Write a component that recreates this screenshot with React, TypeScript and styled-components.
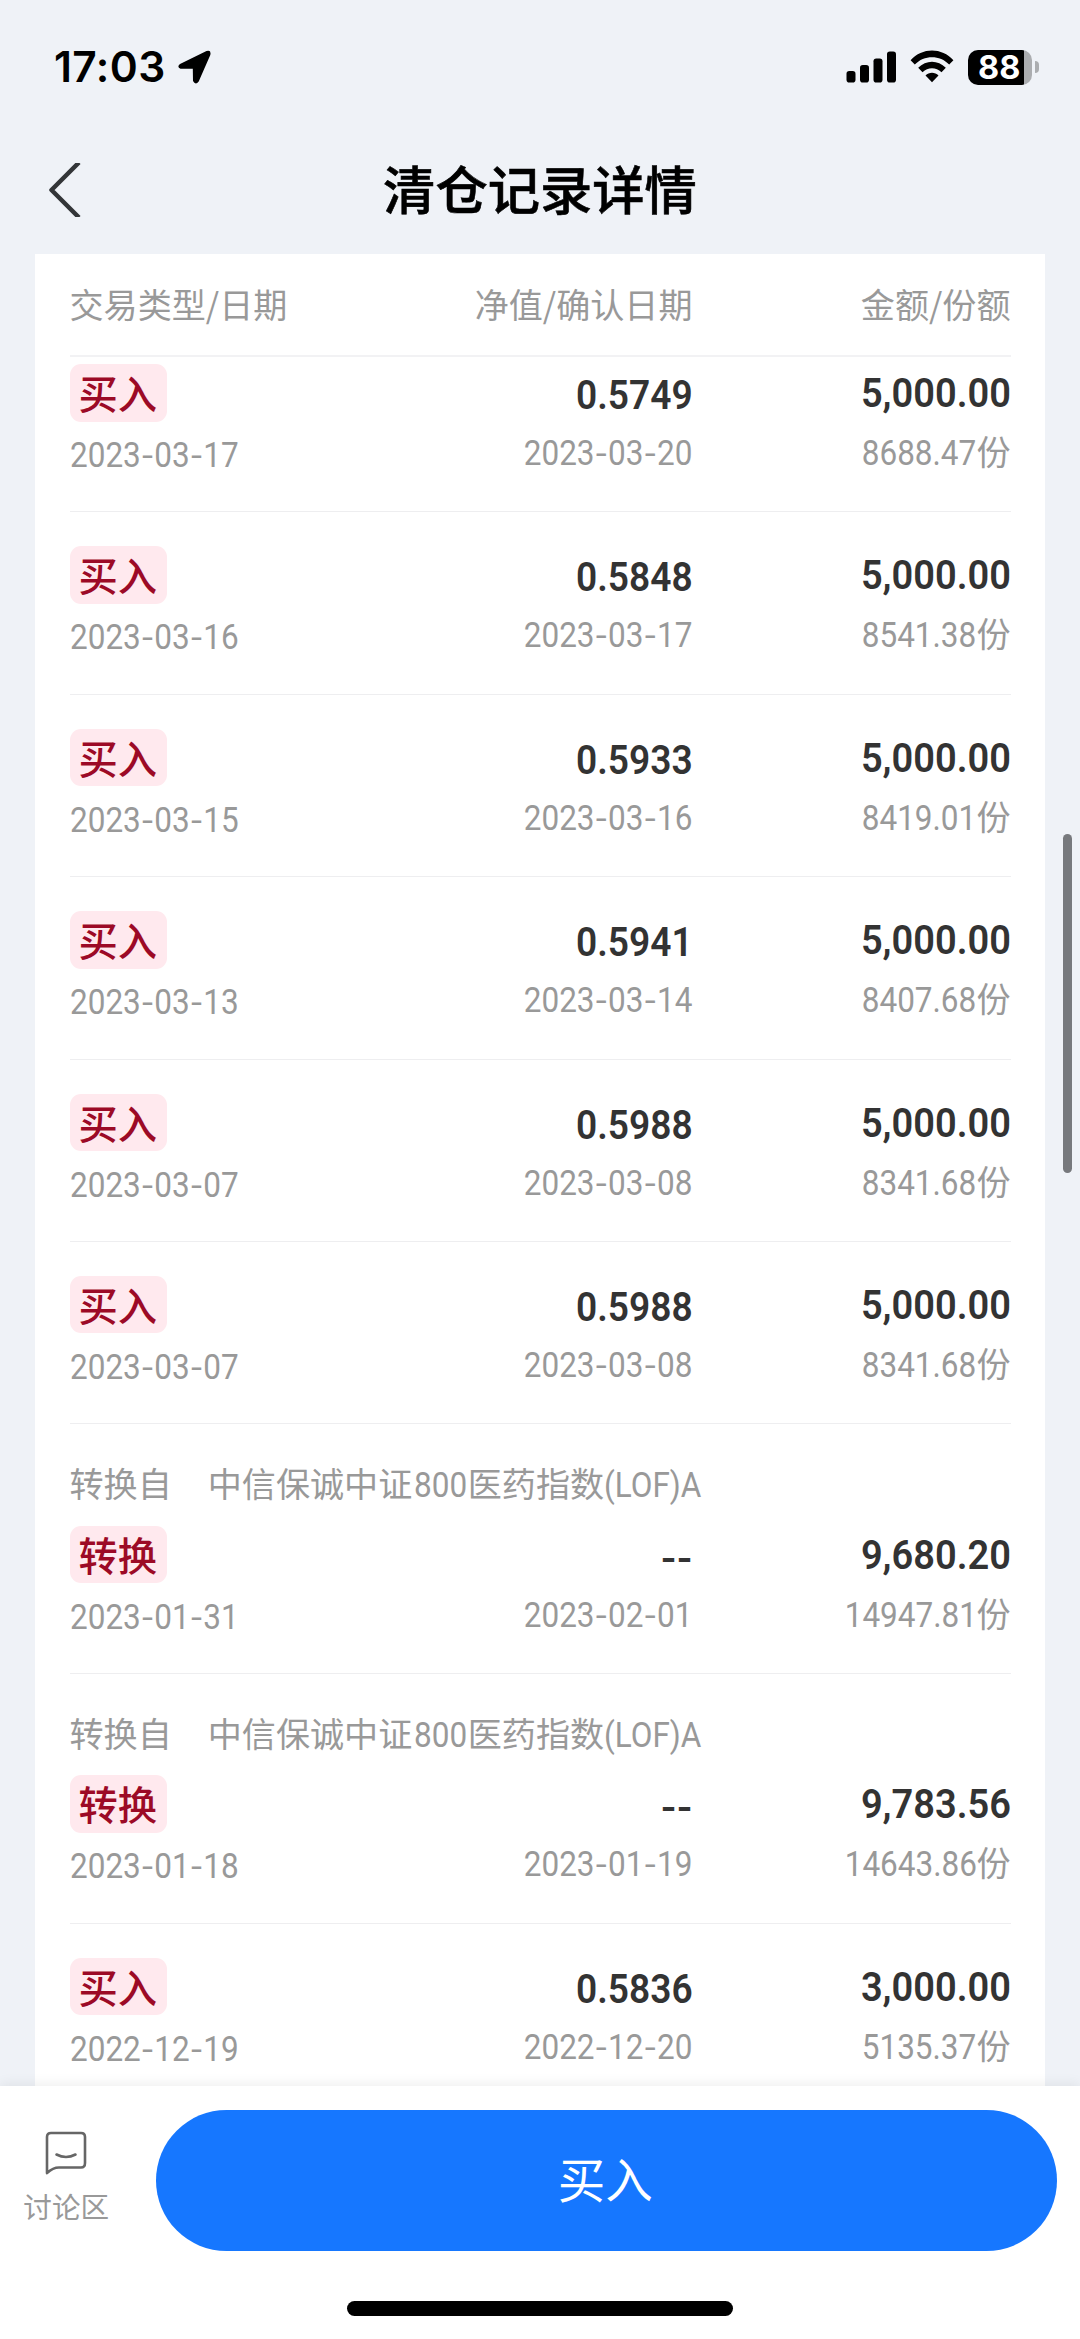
import React from "react";
import styled, { createGlobalStyle } from "styled-components";

const cjk = `"Noto Sans CJK SC", sans-serif`;

const GlobalStyle = createGlobalStyle`
  * { box-sizing: border-box; }
  body { margin: 0; background: #eff2f7; font-family: Roboto, ${cjk}; }
`;

const Screen = styled.div`
  position: relative;
  width: 1080px;
  height: 2339px;
  overflow: hidden;
  display: flex;
  flex-direction: column;
  background: #eff2f7;
`;

const StatusBar = styled.header`
  height: 134px;
  flex: none;
  display: flex;
  align-items: center;
  justify-content: space-between;
  padding: 0 41px 0 54px;
`;

const StatusGroup = styled.div<{ $gap: number }>`
  display: flex;
  align-items: center;
  gap: ${(p) => p.$gap}px;
`;

const Clock = styled.span`
  font: 600 42.5px/50px Inter, sans-serif;
  letter-spacing: 0.4px;
  color: #000;
`;

const Battery = styled.div`
  display: flex;
  align-items: center;
  gap: 2.5px;
`;

const BatteryBody = styled.div`
  width: 64px;
  height: 35px;
  border-radius: 10px;
  background: linear-gradient(to right, #000 56px, #abadb0 56px);
  color: #fff;
  font: 700 32.5px/35px Inter, sans-serif;
  padding-left: 10px;
`;

const BatteryTip = styled.div`
  width: 4.5px;
  height: 12px;
  border-radius: 0 5px 5px 0;
  background: #abadb0;
`;

const NavBar = styled.nav`
  height: 120px;
  flex: none;
  display: grid;
  grid-template-columns: 120px 1fr 120px;
  align-items: center;
`;

const BackButton = styled.button`
  border: 0;
  background: none;
  padding: 0 0 8px 47px;
  display: flex;
`;

const Title = styled.h1`
  margin: 0 0 15px;
  text-align: center;
  font: 500 52.3px/70px ${cjk};
  -webkit-text-stroke: 0.6px #000;
  color: #000;
`;

const Card = styled.main`
  flex: 1;
  min-height: 0;
  overflow: hidden;
  margin: 0 35px;
  padding: 0 34.5px;
  background: #fff;
`;

const columns = `grid-template-columns: 250px 1fr 318px;`;

const TableHead = styled.div`
  display: grid;
  ${columns}
  height: 103px;
  border-bottom: 2px solid #f2f2f4;
  font: 400 34.1px/98px ${cjk};
  color: #999;
`;

const HeadCell = styled.div<{ $end?: boolean }>`
  text-align: ${(p) => (p.$end ? "right" : "left")};
`;

const Record = styled.section<{ $first?: boolean; $last?: boolean }>`
  padding-top: ${(p) => (p.$first ? 7 : 34)}px;
  padding-bottom: 32.4px;
  border-bottom: ${(p) => (p.$last ? 0 : 1)}px solid #eeeef0;
`;

const Source = styled.div`
  display: flex;
  gap: 36px;
  height: 67.3px;
  font: 400 34.1px/48px ${cjk};
  color: #999;
`;

const RecordGrid = styled.div`
  display: grid;
  ${columns}
  height: 115px;
`;

const Cell = styled.div<{ $end?: boolean }>`
  display: flex;
  flex-direction: column;
  align-items: ${(p) => (p.$end ? "flex-end" : "flex-start")};
`;

const Tag = styled.span`
  height: 57.5px;
  padding: 0 10px 0 9px;
  border-radius: 11px;
  background: #ffe9ee;
  color: #9c0a26;
  font: 500 39.3px/55px ${cjk};
`;

const Value = styled.span<{ $top: number; $stretch: number }>`
  margin-top: ${(p) => p.$top}px;
  height: 40px;
  font: 600 40px/40px Roboto, sans-serif;
  transform: scaleX(${(p) => p.$stretch});
  transform-origin: right center;
  color: #333;
`;

const Sub = styled.span<{ $top: number }>`
  margin-top: ${(p) => p.$top}px;
  height: 36px;
  font: 400 35px/36px Roboto, ${cjk};
  white-space: nowrap;
  color: #999;
`;

const Digits = styled.span<{ $from: "left" | "right" }>`
  display: inline-block;
  transform: scaleX(0.9);
  transform-origin: ${(p) => p.$from} center;
`;

const Hyphen = styled.span`
  font-family: Inter, sans-serif;
  font-size: 0.93em;
`;

const Unit = styled.span`
  font: 400 34.1px/36px ${cjk};
`;

const Condensed = styled.span<{ $lead: number; $trim: number }>`
  display: inline-block;
  font: 400 35px/36px Roboto, sans-serif;
  transform: scaleX(0.9);
  transform-origin: left center;
  margin-left: ${(p) => p.$lead}px;
  margin-right: -${(p) => p.$trim}px;
`;

const ScrollThumb = styled.div`
  position: absolute;
  right: 8.5px;
  top: 834px;
  width: 9px;
  height: 339px;
  border-radius: 5px;
  background: #77797d;
`;

const BottomBar = styled.footer`
  position: relative;
  flex: none;
  height: 253px;
  background: #fff;
  box-shadow: 0 -2px 12px rgba(0, 0, 0, 0.07);
  display: flex;
  flex-direction: column;
  justify-content: space-between;
  align-items: center;
  padding: 23.5px 0 23px;
`;

const Actions = styled.div`
  width: 100%;
  display: flex;
  padding-right: 23px;
`;

const Discuss = styled.div`
  width: 155.5px;
  padding: 21px 23px 0 0;
  display: flex;
  flex-direction: column;
  align-items: center;
  font: 400 28.6px/40px ${cjk};
  color: #999;
  gap: 10px;
`;

const BuyButton = styled.button`
  flex: 1;
  height: 141px;
  border: 0;
  border-radius: 71px;
  background: #1677ff;
  color: #fff;
  font: 400 47.5px/136px ${cjk};
  padding: 0 2px 5px 0;
`;

const HomeIndicator = styled.div`
  width: 386px;
  height: 15px;
  border-radius: 8px;
  background: #000;
`;

type Trade = {
  type: string;
  date: string;
  net: string;
  confirmed: string;
  amount: string;
  shares: string;
  from?: boolean;
};

const t = (date: string, net: string, confirmed: string, shares: string, amount = "5,000.00"): Trade => ({
  type: "买入", date, net, confirmed, amount, shares,
});

const trades: Trade[] = [
  t("2023-03-17", "0.5749", "2023-03-20", "8688.47"),
  t("2023-03-16", "0.5848", "2023-03-17", "8541.38"),
  t("2023-03-15", "0.5933", "2023-03-16", "8419.01"),
  t("2023-03-13", "0.5941", "2023-03-14", "8407.68"),
  t("2023-03-07", "0.5988", "2023-03-08", "8341.68"),
  t("2023-03-07", "0.5988", "2023-03-08", "8341.68"),
  { type: "转换", date: "2023-01-31", net: "--", confirmed: "2023-02-01", amount: "9,680.20", shares: "14947.81", from: true },
  { type: "转换", date: "2023-01-18", net: "--", confirmed: "2023-01-19", amount: "9,783.56", shares: "14643.86", from: true },
  t("2022-12-19", "0.5836", "2022-12-20", "5135.37", "3,000.00"),
];

const Dashed = ({ text }: { text: string }) => (
  <>
    {text.split(/(-)/).map((s, i) => (s === "-" ? <Hyphen key={i}>-</Hyphen> : s))}
  </>
);

export default function App() {
  return (
    <Screen>
      <GlobalStyle />
      <StatusBar>
        <StatusGroup $gap={12}>
          <Clock>17:03</Clock>
          <svg width="33" height="34" viewBox="0 0 33 34">
            <path d="M2 14 L28.500 1 Q33.500 -0.500 32.300 5 L20.700 31.500 Q17.500 35.500 15 31 L14.800 18.800 L2.500 18.700 Q-1.500 16.800 2 14Z" fill="#000" />
          </svg>
        </StatusGroup>
        <StatusGroup $gap={14}>
          <svg width="50" height="34" viewBox="0 0 50 34">
            <rect x="0.500" y="21" width="9" height="11.500" rx="2.800" />
            <rect x="14" y="15" width="9" height="17.500" rx="2.800" />
            <rect x="27.500" y="8.500" width="9" height="24" rx="2.800" />
            <rect x="41" y="1.500" width="9" height="31" rx="2.800" />
          </svg>
          <svg width="44" height="34" viewBox="0 0 44 34">
            <path d="M0.600 10.300 C12 -2.800 32 -2.800 43.400 10.300 L39.200 14.600 C30 4.800 14 4.800 4.800 14.600Z" />
            <path d="M8.200 17.800 C16 9.800 28 9.800 35.800 17.800 L31.500 22.200 C26 17 18 17 12.500 22.200Z" />
            <path d="M15.500 25.500 C19 21.800 25 21.800 28.500 25.500 L22 32.300Z" />
          </svg>
          <Battery>
            <BatteryBody>88</BatteryBody>
            <BatteryTip />
          </Battery>
        </StatusGroup>
      </StatusBar>
      <NavBar>
        <BackButton aria-label="返回">
          <svg width="36" height="54" viewBox="0 0 36 54" fill="none" stroke="#333538" strokeWidth="4.500" strokeLinejoin="round">
            <path d="M32 -0.500 L4.500 27 L32 54.500" />
          </svg>
        </BackButton>
        <Title>清仓记录详情</Title>
      </NavBar>
      <Card>
        <TableHead>
          <HeadCell>交易类型/日期</HeadCell>
          <HeadCell $end>净值/确认日期</HeadCell>
          <HeadCell $end>金额/份额</HeadCell>
        </TableHead>
        {trades.map((r, i) => (
          <Record key={i} $first={i === 0} $last={i === trades.length - 1}>
            {r.from && (
              <Source>
                <span>转换自</span>
                <span>
                  中信保诚中证<Condensed $lead={1.5} $trim={5}>800</Condensed>医药指数<Condensed $lead={0} $trim={0}>(LOF)A</Condensed>
                </span>
              </Source>
            )}
            <RecordGrid>
              <Cell>
                <Tag>{r.type}</Tag>
                <Sub $top={15.500}><Digits $from="left"><Dashed text={r.date} /></Digits></Sub>
              </Cell>
              <Cell $end>
                <Value $top={12} $stretch={0.928}><Dashed text={r.net} /></Value>
                <Sub $top={19}><Digits $from="right"><Dashed text={r.confirmed} /></Digits></Sub>
              </Cell>
              <Cell $end>
                <Value $top={10} $stretch={0.95}>{r.amount}</Value>
                <Sub $top={18}><Digits $from="right">{r.shares}</Digits><Unit>份</Unit></Sub>
              </Cell>
            </RecordGrid>
          </Record>
        ))}
      </Card>
      <ScrollThumb />
      <BottomBar>
        <Actions>
          <Discuss>
            <svg width="42" height="45" viewBox="0 0 42 45" fill="none" stroke="#666" strokeWidth="2.600" strokeLinecap="round" strokeLinejoin="round">
              <path d="M2 42 V6 Q2 2 6 2 H36 Q40 2 40 6 V32 Q40 36.500 36 36.500 H14 Q8 36.500 2 42Z" />
              <path d="M11.500 23.500 Q21 28.500 30.500 23.500" />
            </svg>
            <span>讨论区</span>
          </Discuss>
          <BuyButton>买入</BuyButton>
        </Actions>
        <HomeIndicator />
      </BottomBar>
    </Screen>
  );
}
